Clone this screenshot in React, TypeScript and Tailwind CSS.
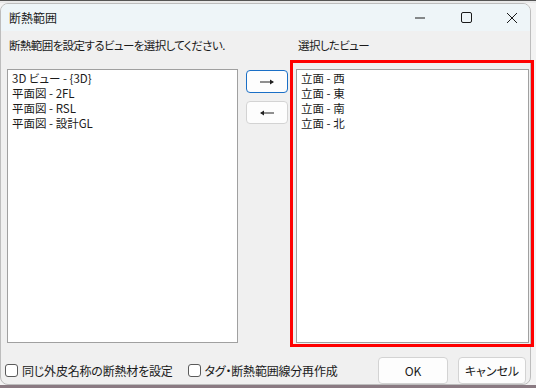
import React from "react";

const font = { fontFamily: '"Noto Sans CJK JP", "Noto Sans", sans-serif' };

function Checkbox({ label, className }: { label: string; className?: string }) {
  return (
    <div className={"flex items-center " + (className ?? "")}>
      <div className="w-[13px] h-[13px] rounded-[3px] border border-[#5a5a5a] bg-white" />
      <span className="ml-[4px] text-[12px] leading-[16px] tracking-[-0.2px] text-[#1a1a1a] [font-feature-settings:'palt']">{label}</span>
    </div>
  );
}

function Arrow({ dir }: { dir: "r" | "l" }) {
  return (
    <svg width="16" height="8" viewBox="0 0 16 8">
      {dir === "r" ? (
        <>
          <line x1="1" y1="4" x2="14" y2="4" stroke="#222" strokeWidth="1.2" />
          <path d="M11 1.5 L15 4 L11 6.5 Z" fill="#222" />
        </>
      ) : (
        <>
          <line x1="2" y1="4" x2="15" y2="4" stroke="#222" strokeWidth="1.2" />
          <path d="M5 1.5 L1 4 L5 6.5 Z" fill="#222" />
        </>
      )}
    </svg>
  );
}

export default function App() {
  const left = ["3D ビュー - {3D}", "平面図 - 2FL", "平面図 - RSL", "平面図 - 設計GL"];
  const right = ["立面 - 西", "立面 - 東", "立面 - 南", "立面 - 北"];
  return (
    <div className="w-[536px] h-[388px] bg-[#f3f3f3] relative overflow-hidden flex flex-col" style={font}>
      <div className="h-[3px] bg-[#e9e9e9] border-t border-[#555]" />
      <div className="w-[531px] h-[382px] rounded-[8px] border border-[#bdbdbd] overflow-hidden flex flex-col bg-[#f0f0f0]">
        {/* Title bar */}
        <div className="h-[27px] bg-[#eef5f8] flex items-center pl-[8px] shrink-0">
          <span className="text-[12px] text-[#1a1a1a] leading-[16px]">断熱範囲</span>
          <div className="ml-auto flex items-center mr-[12px]">
            <svg width="12" height="12" viewBox="0 0 12 12">
              <line x1="1" y1="6" x2="11" y2="6" stroke="#1a1a1a" strokeWidth="1" />
            </svg>
            <svg width="11" height="11" viewBox="0 0 11 11" className="ml-[35px]">
              <rect x="0.5" y="0.5" width="10" height="10" rx="1.5" fill="none" stroke="#1a1a1a" strokeWidth="1" />
            </svg>
            <svg width="12" height="12" viewBox="0 0 12 12" className="ml-[34px]">
              <line x1="1" y1="1" x2="11" y2="11" stroke="#1a1a1a" strokeWidth="1" />
              <line x1="11" y1="1" x2="1" y2="11" stroke="#1a1a1a" strokeWidth="1" />
            </svg>
          </div>
        </div>
        {/* Body */}
        <div className="flex-1 flex flex-col pl-[6px]">
          <div className="flex mt-[6px] h-[16px] text-[11.5px] leading-[16px] tracking-[-0.6px] text-[#1a1a1a] [font-feature-settings:'palt']">
            <span className="ml-[2px] w-[289px]">断熱範囲を設定するビューを選択してください.</span>
            <span>選択したビュー</span>
          </div>
          <div className="flex mt-[16px] h-[274px]">
            <div className="w-[231px] h-full bg-white border border-[#a0a0a0] pl-[4px] pt-[1px] text-[11.5px] leading-[15px] text-[#1a1a1a] [font-feature-settings:'palt']">
              {left.map((t) => (
                <div key={t}>{t}</div>
              ))}
            </div>
            <div className="w-[42px] ml-[8px] flex flex-col pt-[1px]">
              <div className="h-[23px] rounded-[4px] border border-[#1a6fc6] bg-[#fdfdfd] flex items-center justify-center">
                <Arrow dir="r" />
              </div>
              <div className="h-[23px] mt-[8px] rounded-[4px] border border-[#d3d3d3] bg-[#fdfdfd] flex items-center justify-center">
                <Arrow dir="l" />
              </div>
            </div>
            <div className="w-[233px] ml-[8px] h-full bg-white border border-[#a0a0a0] pl-[4px] pt-[1px] text-[11.5px] leading-[15px] text-[#1a1a1a] [font-feature-settings:'palt']">
              {right.map((t) => (
                <div key={t}>{t}</div>
              ))}
            </div>
          </div>
          <div className="flex items-center mt-[14px] h-[27px] -ml-[2px]">
            <Checkbox label="同じ外皮名称の断熱材を設定" />
            <Checkbox label="タグ・断熱範囲線分再作成" className="ml-[15px]" />
            <div className="ml-auto flex mr-[4px]">
              <div className="w-[70px] h-[27px] rounded-[4px] border border-[#d3d3d3] bg-[#fdfdfd] flex items-center justify-center text-[12px] text-[#1a1a1a]">
                OK
              </div>
              <div className="w-[68px] h-[27px] ml-[10px] rounded-[4px] border border-[#d3d3d3] bg-[#fdfdfd] flex items-center justify-center text-[12px] text-[#1a1a1a] [font-feature-settings:'palt']">
                キャンセル
              </div>
            </div>
          </div>
        </div>
      </div>
      <div className="flex-1 bg-[#8a7a82]" />
      {/* red annotation */}
      <div className="absolute left-[290px] top-[60px] w-[244px] h-[287px] border-[3px] border-[#ff0000] pointer-events-none" />
    </div>
  );
}
